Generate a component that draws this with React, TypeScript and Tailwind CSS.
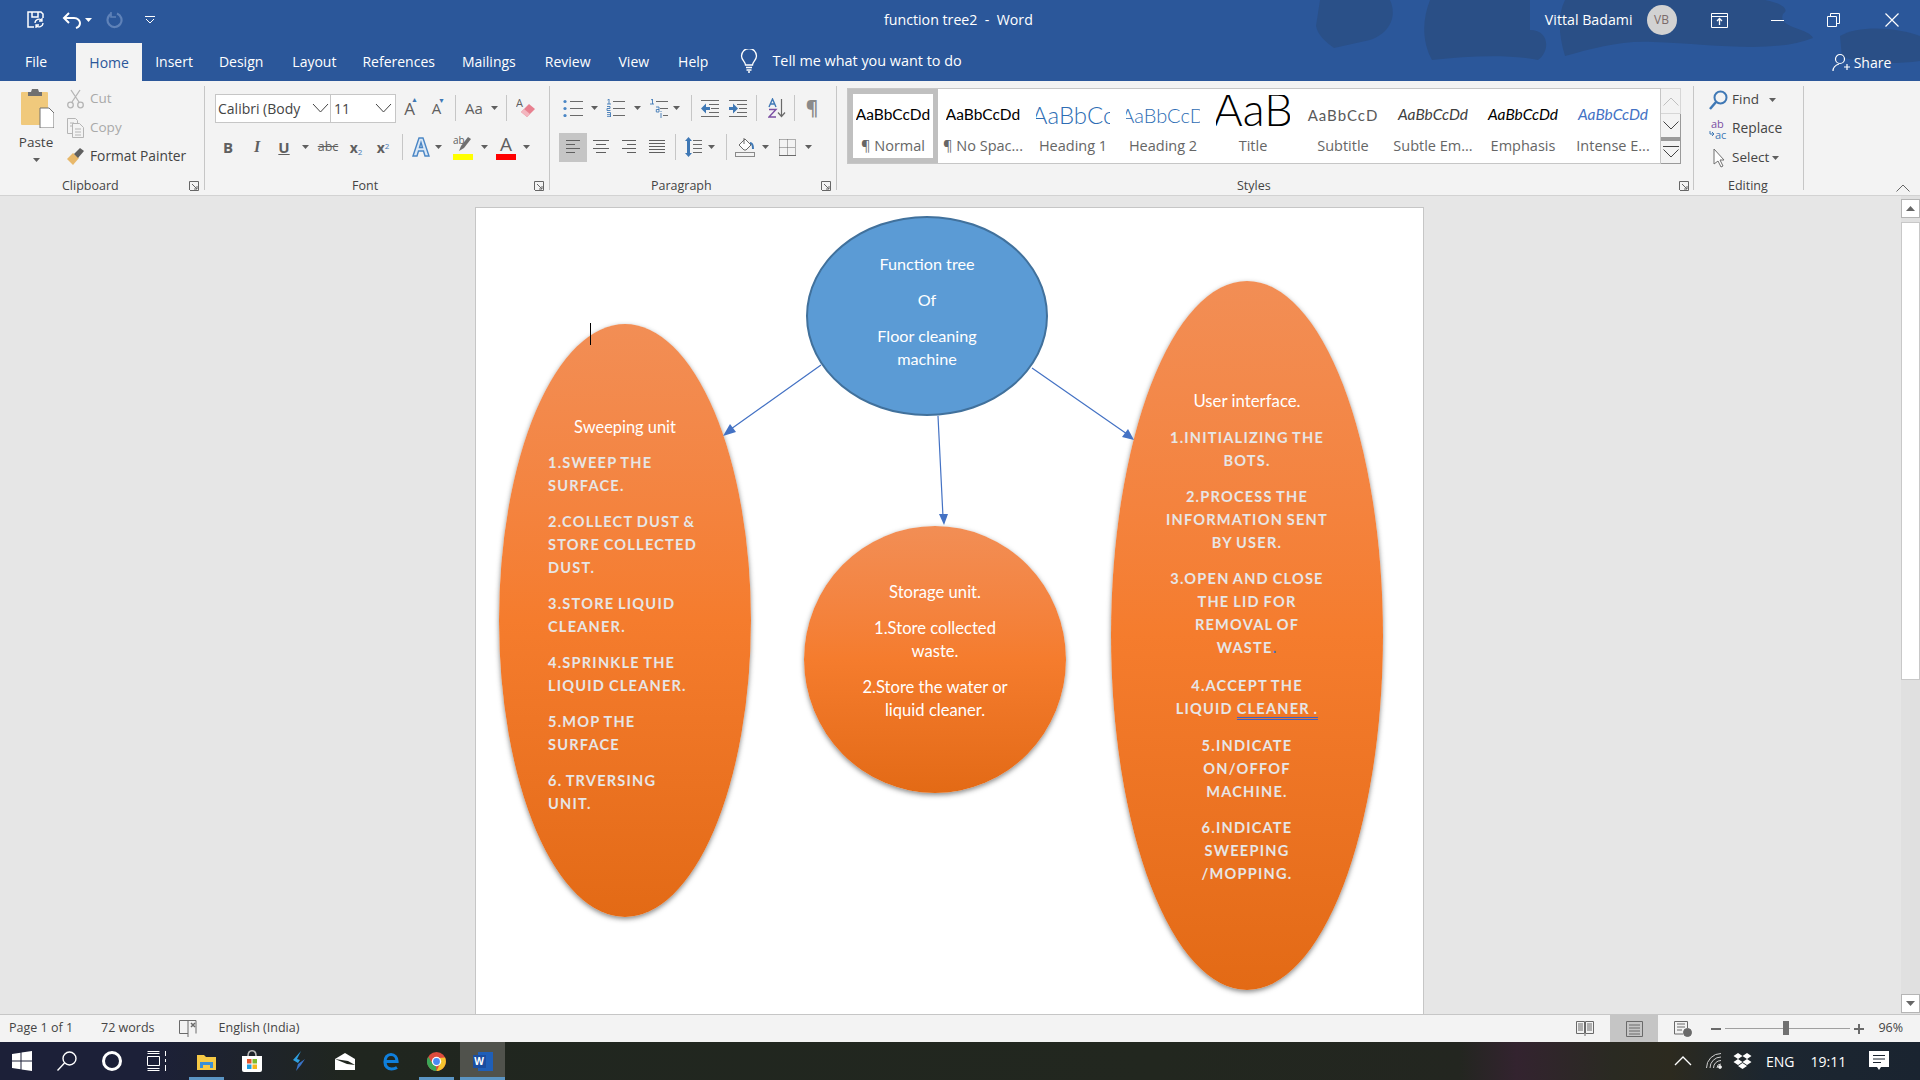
import React from 'react';

const Caret = ({ className = '' }: { className?: string }) => (
  <svg width="7" height="4" viewBox="0 0 7 4" className={`shrink-0 ${className}`}>
    <path d="M0 0h7L3.5 4z" fill="#5f5f5f" />
  </svg>
);

const Sep = ({ className = '' }: { className?: string }) => (
  <div className={`w-px h-[26px] bg-[#c6c6c6] shrink-0 ${className}`} />
);

const Launcher = ({ className = '' }: { className?: string }) => (
  <svg width="10" height="10" viewBox="0 0 10 10" className={`shrink-0 ${className}`} fill="none" stroke="#666">
    <path d="M.5 9V.5H9.5V9.5H1" />
    <path d="M3 3l5 5M8 5v3H5" />
  </svg>
);

const GroupSep = () => <div className="w-px bg-[#c6c6c6] my-[5px] shrink-0" />;

const AlignIcon = ({ mode, className = '' }: { mode: 'l' | 'c' | 'r' | 'j'; className?: string }) => {
  const rows = mode === 'l'
    ? [[2, 16], [2, 11], [2, 16], [2, 11]]
    : mode === 'c'
      ? [[1, 17], [4, 14], [1, 17], [4, 14]]
      : mode === 'r'
        ? [[2, 16], [7, 16], [2, 16], [7, 16]]
        : [[1, 17], [1, 17], [1, 17], [1, 17], [1, 17]];
  const step = mode === 'j' ? 3 : 4;
  return (
    <svg width="18" height="16" viewBox="0 0 18 16" className={`shrink-0 ${className}`} stroke="#5f5f5f">
      {rows.map((r, i) => <path key={i} d={`M${r[0]} ${1.5 + i * step}H${r[1]}`} />)}
    </svg>
  );
};

const Bullets = ({ className = '' }: { className?: string }) => (
  <svg width="20" height="18" viewBox="0 0 20 18" className={`shrink-0 ${className}`}>
    <path d="M7 2.5h13M7 9.5h13M7 16.5h13" stroke="#6a6a6a" />
    <circle cx="2" cy="2.5" r="1.6" fill="#4a86c5" /><circle cx="2" cy="9.5" r="1.6" fill="#4a86c5" /><circle cx="2" cy="16.5" r="1.6" fill="#4a86c5" />
  </svg>
);

const Numbering = ({ className = '' }: { className?: string }) => (
  <svg width="19" height="18" viewBox="0 0 19 18" className={`shrink-0 ${className}`}>
    <path d="M7 2.5h12M7 9.5h12M7 16.5h12" stroke="#6a6a6a" />
    <path d="M1.5 1L3 0v5M1 5h4M1 7.5h3v2H1v2h3.5M1 13.5h3.5V18M1 15.7h3M1 17.7h3.5" stroke="#3f78b5" fill="none" strokeWidth="0.9" />
  </svg>
);

const Multilevel = ({ className = '' }: { className?: string }) => (
  <svg width="18" height="19" viewBox="0 0 18 19" className={`shrink-0 ${className}`}>
    <path d="M6 2.5h12M10 9.5h8M13 16.5h5" stroke="#6a6a6a" />
    <path d="M1 1l1.5-1v5M0 5h4" stroke="#3f78b5" fill="none" strokeWidth="0.9" />
    <path d="M6 8h3v5H6.3V10.5H9" stroke="#3f78b5" fill="none" strokeWidth="0.9" />
    <path d="M11 14v5M11 12v1" stroke="#3f78b5" strokeWidth="0.9" />
  </svg>
);

const Indent = ({ flip, className = '' }: { flip?: boolean; className?: string }) => (
  <svg width="18" height="17" viewBox="0 0 18 17" className={`shrink-0 ${className}`}>
    <path d="M0 .5h18M8 4.5h10M10 8.5h8M8 12.5h10M0 16.5h18" stroke="#6a6a6a" />
    {flip
      ? <path d="M0 7h4V3.5L9 8.5l-5 5V10H0z" fill="#3f78b5" />
      : <path d="M9 7H5V3.5L0 8.5l5 5V10h4z" fill="#3f78b5" />}
  </svg>
);

const Sort = ({ className = '' }: { className?: string }) => (
  <svg width="18" height="20" viewBox="0 0 18 20" className={`shrink-0 ${className}`} fill="none">
    <path d="M1 9L4.5 1 8 9M2.5 6h4" stroke="#3f78b5" strokeWidth="1.4" />
    <path d="M1 11.5h7L1 19h7" stroke="#7b4fa3" strokeWidth="1.4" />
    <path d="M13.5 1v17M10 14.5l3.5 4 3.5-4" stroke="#6a6a6a" strokeWidth="1.2" />
  </svg>
);

const LineSpacing = ({ className = '' }: { className?: string }) => (
  <svg width="17" height="20" viewBox="0 0 17 20" className={`shrink-0 ${className}`}>
    <path d="M8 3.5h9M8 7.5h9M8 11.5h9M8 15.5h9" stroke="#6a6a6a" />
    <path d="M3.5 0L7 4H5v12h2l-3.5 4L0 16h2V4H0z" fill="#3f78b5" />
  </svg>
);

const Shading = ({ className = '' }: { className?: string }) => (
  <svg width="20" height="20" viewBox="0 0 20 20" className={`shrink-0 ${className}`} fill="none">
    <path d="M4 8l6-6 6 6-5 5-2 0z" stroke="#6a6a6a" fill="#fff" />
    <path d="M9 1v6" stroke="#6a6a6a" />
    <path d="M15 6c3 0 3 3 3 6" stroke="#3f78b5" strokeWidth="2" />
    <rect x=".5" y="15.5" width="19" height="4" stroke="#8a8a8a" />
  </svg>
);

const Borders = ({ className = '' }: { className?: string }) => (
  <svg width="17" height="17" viewBox="0 0 17 17" className={`shrink-0 ${className}`} fill="none" stroke="#6a6a6a">
    <path d="M.5.5h16v16M.5.5v16M8.5.5v16M.5 8.5h16" strokeDasharray="1 1" />
    <path d="M0 16.5h17" />
  </svg>
);

const GALLERY = [
  { label: '¶ Normal', text: 'AaBbCcDd', cls: "font-['Lato'] text-[15.5px] text-black", selected: true },
  { label: '¶ No Spac...', text: 'AaBbCcDd', cls: "font-['Lato'] text-[15.5px] text-black" },
  { label: 'Heading 1', text: 'AaBbCc', cls: "font-['Lato'] font-light text-[24px] text-[#2e6db4]" },
  { label: 'Heading 2', text: 'AaBbCcD', cls: "font-['Lato'] font-light text-[20px] text-[#2e6db4]" },
  { label: 'Title', text: 'AaB', cls: "font-['Lato'] font-light text-[45px] leading-[46px] text-black -mt-[12px]" },
  { label: 'Subtitle', text: 'AaBbCcD', cls: "font-['Lato'] text-[15px] tracking-[1px] text-[#5a5a5a]" },
  { label: 'Subtle Em...', text: 'AaBbCcDd', cls: "font-['Lato'] italic text-[15.5px] text-[#404040]" },
  { label: 'Emphasis', text: 'AaBbCcDd', cls: "font-['Lato'] italic text-[15.5px] text-black" },
  { label: 'Intense E...', text: 'AaBbCcDd', cls: "font-['Lato'] italic text-[15.5px] text-[#4472c4]" },
];

const TABS = [
  { label: 'File', cls: 'ml-[25px]' },
  { label: 'Insert', cls: 'ml-[13px]' },
  { label: 'Design', cls: 'ml-[26px]' },
  { label: 'Layout', cls: 'ml-[29px]' },
  { label: 'References', cls: 'ml-[26px]' },
  { label: 'Mailings', cls: 'ml-[27px]' },
  { label: 'Review', cls: 'ml-[29px]' },
  { label: 'View', cls: 'ml-[28px]' },
  { label: 'Help', cls: 'ml-[29px]' },
];

const TitleBar = () => (
  <div className="relative bg-[#2b579a] text-white shrink-0 h-[81px] overflow-hidden">
    <svg width="640" height="81" viewBox="0 0 640 81" className="absolute right-0 top-0">
      <path d="M40 0h70c8 18-2 34-20 40l-36 8c-8-6-16-12-18-22z" fill="#2a5088" />
      <path d="M150 0h100v30c20 0 20 22 8 30-30-6-70-4-106 0-10-18-10-40-2-60z" fill="#2a4f86" />
      <path d="M285 0h200c20 4 24 10 18 14-6 14 26 14 30 24-40 16-100 6-160 4-30-2-60 6-88 14-6-20-8-40 0-56z" fill="#2a4f86" />
      <path d="M560 36c20-12 60-8 80 0v25c-30 4-60 2-78-4z" fill="#2a4f86" />
    </svg>
    <div className="relative flex items-center h-[40px]">
      <svg width="20" height="20" viewBox="0 0 20 20" className="ml-[26px] shrink-0" fill="none" stroke="#fff" strokeWidth="1.5">
        <path d="M8 17H2V2h13l2 2v4" />
        <path d="M6 2v5h6V2" />
        <path d="M9 13a4 4 0 0 1 7-2.5M17 13a4 4 0 0 1-7 2.5M16 8v3h-3M10 18v-3h3" strokeWidth="1.3" />
      </svg>
      <svg width="20" height="18" viewBox="0 0 20 18" className="ml-[16px] shrink-0" fill="none" stroke="#fff" strokeWidth="2">
        <path d="M7 2L2 7l5 5" />
        <path d="M2 7h10c4 0 6 3 6 5s-1 4-4 5" />
      </svg>
      <svg width="7" height="4" viewBox="0 0 7 4" className="ml-[3px] shrink-0"><path d="M0 0h7L3.500 4z" fill="#fff" /></svg>
      <svg width="18" height="18" viewBox="0 0 18 18" className="ml-[14px] shrink-0" fill="none" stroke="#5f82b8" strokeWidth="2.2">
        <path d="M11 2.500a7 7 0 1 1-6 .5" />
        <path d="M5 1v5h5" strokeWidth="1.6" />
      </svg>
      <svg width="10" height="8" viewBox="0 0 10 8" className="ml-[21px] shrink-0" fill="none" stroke="#fff">
        <path d="M0 .5h10M1 3l4 4 4-4" />
      </svg>
      <div className="ml-[729px] text-[14.200px] whitespace-pre">function tree2  -  Word</div>
      <div className="ml-[512px] text-[14.200px]">Vittal Badami</div>
      <div className="ml-[14px] w-[30px] h-[30px] rounded-full bg-[#d2d2d2] text-[#7a6a6a] text-[12px] flex items-center justify-center">VB</div>
      <svg width="17" height="15" viewBox="0 0 17 15" className="ml-[34px] shrink-0" fill="none" stroke="#fff">
        <path d="M.5.500h16v14H.5zM.5 3.500h16" />
        <path d="M8.500 12V6M6 8l2.500-2.500L11 8" strokeWidth="1.300" />
      </svg>
      <div className="ml-[43px] w-[13px] h-px bg-white" />
      <svg width="13" height="14" viewBox="0 0 13 14" className="ml-[43px] shrink-0" fill="none" stroke="#fff">
        <path d="M.5 3.500h9v10h-9zM3.500 3.500V.5h9v10h-3" />
      </svg>
      <svg width="14" height="14" viewBox="0 0 14 14" className="ml-[45px] shrink-0" stroke="#fff" strokeWidth="1.200">
        <path d="M.5.500l13 13M13.500.500l-13 13" />
      </svg>
    </div>
    <div className="relative flex items-center h-[41px] text-[14px] pt-px">
      <div className={TABS[0].cls}>{TABS[0].label}</div>
      <div className="ml-[29px] w-[66px] h-[38px] mt-auto bg-[#f3f3f3] text-[#2b579a] flex items-center justify-center">Home</div>
      {TABS.slice(1).map(t => <div key={t.label} className={t.cls}>{t.label}</div>)}
      <svg width="18" height="24" viewBox="0 0 18 24" className="ml-[32px] shrink-0" fill="none" stroke="#fff" strokeWidth="1.300">
        <path d="M5.500 16c0-3-4-5-4-9a7.500 7.500 0 0 1 15 0c0 4-4 6-4 9z" />
        <path d="M6 18.500h6M6.500 21h5M8 23h2" />
      </svg>
      <div className="ml-[14px] text-[14.400px]">Tell me what you want to do</div>
      <svg width="18" height="19" viewBox="0 0 18 19" className="ml-[870px] mt-[3px] shrink-0" fill="none" stroke="#fff" strokeWidth="1.200">
        <circle cx="8" cy="6" r="4.500" />
        <path d="M1 18c0-4 3-6 6-7M12 14h6M15 11v6" />
      </svg>
      <div className="ml-[4px] mt-[3px]">Share</div>
    </div>
  </div>
);

const Clipboard = () => (
  <div className="w-[204px] flex flex-col shrink-0">
    <div className="flex flex-1">
      <div className="w-[67px] flex flex-col items-center pt-[7px] pl-[5px] shrink-0">
        <svg width="36" height="40" viewBox="0 0 36 40" className="shrink-0">
          <rect x="3" y="4" width="27" height="33" rx="1" fill="#f0c97c" />
          <path d="M10 4h3l1-3h6l1 3h3v4H10z" fill="#707070" />
          <path d="M22 20h9l5 5v15H22z" fill="#fff" stroke="#707070" />
        </svg>
        <div className="text-[13.500px] leading-[18px] mt-[5px]">Paste</div>
        <Caret className="mt-[7px]" />
      </div>
      <div className="flex flex-col pt-[3px]">
        <div className="flex items-center h-[29px] text-[#a9a9a9]">
          <svg width="17" height="20" viewBox="0 0 17 20" className="shrink-0" fill="none" stroke="#b5b5b5" strokeWidth="1.300">
            <path d="M4 1l8 12M13 1L5 13" />
            <circle cx="3.500" cy="16" r="2.800" /><circle cx="13.500" cy="16" r="2.800" />
          </svg>
          <span className="ml-[6px]">Cut</span>
        </div>
        <div className="flex items-center h-[29px] text-[#a9a9a9]">
          <svg width="17" height="20" viewBox="0 0 17 20" className="shrink-0" fill="#f3f3f3" stroke="#b5b5b5">
            <path d="M.5.500h8l2 2v13H.5z" /><path d="M5.500 5.500h7l4 4v10h-11z" />
            <path d="M3 5h4M3 8h2M8 11h6M8 14h6M8 17h6" />
          </svg>
          <span className="ml-[6px]">Copy</span>
        </div>
        <div className="flex items-center h-[29px]">
          <svg width="17" height="17" viewBox="0 0 17 17" className="shrink-0">
            <path d="M0 11l6-6 6 5-6 7z" fill="#e8b86a" />
            <path d="M7 6l6-6 4 3-6 7z" fill="#5f5f5f" />
          </svg>
          <span className="ml-[6px] text-[13.800px]">Format Painter</span>
        </div>
      </div>
    </div>
    <div className="h-[20px] mb-[-1px] flex items-center pl-[62px] pr-[5px] text-[12.500px]">
      <span>Clipboard</span>
      <Launcher className="ml-auto" />
    </div>
  </div>
);

const Font = () => (
  <div className="w-[344px] flex flex-col shrink-0 pl-[10px]">
    <div className="flex items-center h-[30px] mt-[12px]">
      <div className="w-[116px] h-[29px] bg-white border border-[#c6c6c6] flex items-center pl-[2px] text-[14px] overflow-hidden">
        <span className="whitespace-nowrap w-[92px]">Calibri (Body</span>
        <svg width="17" height="10" viewBox="0 0 17 10" fill="none" stroke="#444" className="ml-[2px] shrink-0"><path d="M1 1l7.500 8L16 1" /></svg>
      </div>
      <div className="w-[65px] h-[29px] bg-white border border-l-0 border-[#c6c6c6] flex items-center pl-[3px] text-[14px]">
        <span>11</span>
        <svg width="17" height="10" viewBox="0 0 17 10" fill="none" stroke="#444" className="ml-auto mr-[3px] shrink-0"><path d="M1 1l7.500 8L16 1" /></svg>
      </div>
      <div className="ml-[5px] w-[17px] text-[17px] leading-none text-[#5f5f5f] text-center relative">A<span className="absolute -top-[4px] right-0 text-[7px] text-[#3f78b5]">▲</span></div>
      <div className="ml-[10px] w-[17px] text-[15px] leading-none text-[#5f5f5f] text-center relative">A<span className="absolute -top-[4px] right-0 text-[7px] text-[#3f78b5]">▼</span></div>
      <Sep className="ml-[10px]" />
      <div className="ml-[8px] w-[20px] text-[15px] text-[#5f5f5f] text-center">Aa</div>
      <Caret className="ml-[7px]" />
      <Sep className="ml-[8px]" />
      <svg width="20" height="22" viewBox="0 0 20 22" className="ml-[9px] shrink-0">
        <text x="0" y="10" fontSize="11" fill="#5f5f5f" fontFamily="Open Sans">A</text>
        <path d="M5 15l8-8 6 5-8 8z" fill="#e8808f" />
        <path d="M5 15l3-3 6 5-3 3z" fill="#f3b6bf" />
      </svg>
    </div>
    <div className="flex items-center h-[30px] mt-[9px] text-[#5f5f5f]">
      <div className="ml-[3px] w-[20px] text-center font-bold text-[15px]">B</div>
      <div className="ml-[9px] w-[20px] text-center font-bold italic font-['Liberation_Serif'] text-[16px]">I</div>
      <div className="ml-[7px] w-[20px] text-center font-bold underline text-[15px]">U</div>
      <Caret className="ml-[8px]" />
      <div className="ml-[7px] w-[24px] text-center line-through text-[12.500px]">abc</div>
      <div className="ml-[6px] w-[20px] text-center font-bold text-[14px]">x<sub className="text-[8px] text-[#3f78b5] font-normal">2</sub></div>
      <div className="ml-[7px] w-[20px] text-center font-bold text-[14px]">x<sup className="text-[8px] text-[#3f78b5] font-normal">2</sup></div>
      <Sep className="ml-[9px]" />
      <svg width="18" height="20" viewBox="0 0 18 20" className="ml-[9px] shrink-0" fill="#dbe8f6" stroke="#4a86c5" strokeWidth="1.400">
        <path d="M1 19L7 1h4l6 18h-4l-1.500-5h-5L5 19zM7.500 10.500h3L9 5.500z" />
      </svg>
      <Caret className="ml-[5px]" />
      <div className="ml-[11px] w-[20px] h-[25px] flex flex-col">
        <svg width="20" height="18" viewBox="0 0 20 18" className="shrink-0">
          <text x="0" y="9" fontSize="10" fill="#5f5f5f" fontFamily="Open Sans">ab</text>
          <path d="M6 16l2-5 7-9 3 2-7 9z" fill="#707070" />
        </svg>
        <div className="h-[6px] bg-[#ffff00] mt-px" />
      </div>
      <Caret className="ml-[8px]" />
      <div className="ml-[8px] w-[20px] h-[25px] flex flex-col">
        <div className="h-[18px] text-[19px] leading-[18px] text-center">A</div>
        <div className="h-[6px] bg-[#ff0000] mt-px" />
      </div>
      <Caret className="ml-[7px]" />
    </div>
    <div className="h-[20px] mt-auto mb-[-1px] flex items-center pr-[5px] text-[12.500px]">
      <span className="ml-[137px]">Font</span>
      <Launcher className="ml-auto" />
    </div>
  </div>
);

const Paragraph = () => (
  <div className="w-[286px] flex flex-col shrink-0 pl-[9px]">
    <div className="flex items-center h-[30px] mt-[12px]">
      <Bullets className="ml-[4px]" />
      <Caret className="ml-[8px]" />
      <Numbering className="ml-[8px]" />
      <Caret className="ml-[9px]" />
      <Multilevel className="ml-[9px]" />
      <Caret className="ml-[5px]" />
      <Sep className="ml-[11px]" />
      <Indent className="ml-[9px]" />
      <Indent flip className="ml-[10px]" />
      <Sep className="ml-[9px]" />
      <Sort className="ml-[11px]" />
      <Sep className="ml-[8px]" />
      <div className="ml-[9px] w-[16px] text-[19px] leading-none text-center font-bold text-[#8a8a8a]">¶</div>
    </div>
    <div className="flex items-center h-[30px] mt-[9px]">
      <div className="w-[28px] h-[29px] bg-[#c5c5c5] flex items-center justify-center"><AlignIcon mode="l" /></div>
      <AlignIcon mode="c" className="ml-[5px]" />
      <AlignIcon mode="r" className="ml-[10px]" />
      <AlignIcon mode="j" className="ml-[10px]" />
      <Sep className="ml-[9px]" />
      <LineSpacing className="ml-[9px]" />
      <Caret className="ml-[6px]" />
      <Sep className="ml-[11px]" />
      <Shading className="ml-[8px]" />
      <Caret className="ml-[7px]" />
      <Borders className="ml-[10px]" />
      <Caret className="ml-[9px]" />
    </div>
    <div className="h-[20px] mt-auto mb-[-1px] flex items-center pr-[5px] text-[12.500px]">
      <span className="ml-[92px]">Paragraph</span>
      <Launcher className="ml-auto" />
    </div>
  </div>
);

const Styles = () => (
  <div className="w-[856px] flex flex-col shrink-0 pl-[10px]">
    <div className="flex mt-[7px] h-[76px]">
      <div className="w-[814px] h-[76px] bg-white border border-[#c6c6c6] flex shrink-0">
        {GALLERY.map(g => (
          <div
            key={g.label}
            className={g.selected
              ? 'w-[90px] shrink-0 border-[5px] border-[#c0c0c0] flex flex-col items-center'
              : 'w-[90px] shrink-0 border-[5px] border-transparent flex flex-col items-center'}
          >
            <div className="h-[40px] mt-px w-[74px] flex items-center justify-center overflow-hidden whitespace-nowrap">
              <span className={g.cls}>{g.text}</span>
            </div>
            <div className="text-[14.500px] leading-[18px] mt-[2px] text-[#666] whitespace-nowrap">{g.label}</div>
          </div>
        ))}
      </div>
      <div className="w-[20px] flex flex-col shrink-0">
        <div className="h-[26px] border border-l-0 border-[#d6d6d6] flex items-center justify-center">
          <svg width="16" height="9" viewBox="0 0 16 9" fill="none" stroke="#c0c0c0"><path d="M.5 8.500L8 1l7.500 7.500" /></svg>
        </div>
        <div className="h-[24px] border border-l-0 border-t-0 border-[#9a9a9a] flex items-center justify-center">
          <svg width="16" height="9" viewBox="0 0 16 9" fill="none" stroke="#444"><path d="M.5.500L8 8l7.500-7.500" /></svg>
        </div>
        <div className="h-[26px] border border-l-0 border-t-[3px] border-[#9a9a9a] flex flex-col items-center justify-center">
          <div className="w-[16px] h-px bg-[#444] mb-[2px]" />
          <svg width="16" height="9" viewBox="0 0 16 9" fill="none" stroke="#444"><path d="M.5.500L8 8l7.500-7.500" /></svg>
        </div>
      </div>
    </div>
    <div className="h-[20px] mt-auto mb-[-1px] flex items-center pr-[4px] text-[12.500px]">
      <span className="ml-[390px]">Styles</span>
      <Launcher className="ml-auto" />
    </div>
  </div>
);

const Editing = () => (
  <div className="w-[109px] flex flex-col shrink-0">
    <div className="flex flex-col pt-[2px] pl-[15px] mt-[1px]">
      <div className="flex items-center h-[29px] mt-[1px]">
        <svg width="19" height="20" viewBox="0 0 19 20" className="shrink-0" fill="none">
          <circle cx="11.500" cy="7.500" r="6" stroke="#3f78b5" strokeWidth="2" />
          <path d="M7 12l-6 7" stroke="#3f78b5" strokeWidth="2.500" />
        </svg>
        <span className="ml-[4px]">Find</span>
        <Caret className="ml-[10px]" />
      </div>
      <div className="flex items-center h-[29px]">
        <div className="w-[19px] text-[11px] leading-[11px] shrink-0">
          <div className="text-[#7b4fa3] pl-[2px]">ab</div>
          <div className="text-[#3f78b5] whitespace-nowrap flex items-center">
            <svg width="6" height="7" viewBox="0 0 6 7" fill="none" stroke="#3f78b5" className="shrink-0"><path d="M1 0v3h4M3 1l2 2-2 2" /></svg>
            ac
          </div>
        </div>
        <span className="ml-[4px] text-[13.800px]">Replace</span>
      </div>
      <div className="flex items-center h-[29px]">
        <svg width="12" height="20" viewBox="0 0 12 20" className="ml-[4px] shrink-0" fill="#fff" stroke="#707070">
          <path d="M1 1v15l4-3 3 6 2-1-3-6h4z" />
        </svg>
        <span className="ml-[7px]">Select</span>
        <Caret className="ml-[3px]" />
      </div>
    </div>
    <div className="h-[20px] mt-auto mb-[-1px] flex items-center pl-[34px] text-[12.500px]">Editing</div>
  </div>
);

const Ribbon = () => (
  <div className="relative h-[115px] bg-[#f3f3f3] border-b border-[#d2d2d2] flex text-[13.500px] text-[#444] shrink-0">
    <Clipboard />
    <GroupSep />
    <Font />
    <GroupSep />
    <Paragraph />
    <GroupSep />
    <Styles />
    <GroupSep />
    <Editing />
    <GroupSep />
    <svg width="14" height="8" viewBox="0 0 14 8" fill="none" stroke="#666" className="ml-[92px] mt-[103px] shrink-0"><path d="M.5 7.500L7 1l6.500 6.500" /></svg>
  </div>
);

const para = "mt-[13px] font-bold text-[#e7e6e6] text-[14.600px] tracking-[1.200px] [word-spacing:-1px]";
const orange = "absolute rounded-[50%] bg-gradient-to-b from-[#f28e55] via-[#f57c2d] via-50% to-[#e36a15] shadow-[0_2px_5px_rgba(40,40,40,0.55)] font-['Lato'] leading-[23px] flex flex-col";

const Diagram = () => (
  <>
    <div className="absolute left-[330px] top-[8px] w-[242px] h-[200px] rounded-[50%] bg-[#5b9bd5] border-2 border-[#41719c] font-['Lato'] leading-[23px] text-white text-[16.200px] text-center pt-[34px]">
      <div>Function tree</div>
      <div className="mt-[13px]">Of</div>
      <div className="mt-[13px]">Floor cleaning<br />machine</div>
    </div>

    <div className={`${orange} left-[23px] top-[116px] w-[252px] h-[593px] pt-[91px]`}>
      <div className="text-white text-[16.400px] text-center">Sweeping unit</div>
      <div className="pl-[49px]">
        <div className={para}>1.SWEEP THE<br />SURFACE.</div>
        <div className={para}>2.COLLECT DUST &amp;<br />STORE COLLECTED<br />DUST.</div>
        <div className={para}>3.STORE LIQUID<br />CLEANER.</div>
        <div className={para}>4.SPRINKLE THE<br />LIQUID CLEANER.</div>
        <div className={para}>5.MOP THE<br />SURFACE</div>
        <div className={para}>6. TRVERSING<br />UNIT.</div>
      </div>
    </div>

    <div className={`${orange} left-[328px] top-[318px] w-[262px] h-[267px] pt-[55px] items-center text-center text-white text-[16.600px]`}>
      <div>Storage unit.</div>
      <div className="mt-[13px]">1.Store collected<br />waste.</div>
      <div className="mt-[13px]">2.Store the water or<br />liquid cleaner.</div>
    </div>

    <div className={`${orange} left-[635px] top-[73px] w-[272px] h-[709px] pt-[108px] text-center`}>
      <div className="text-white text-[16.800px] mb-px">User interface.</div>
      <div className={para}>1.INITIALIZING THE<br />BOTS.</div>
      <div className={para}>2.PROCESS THE<br />INFORMATION SENT<br />BY USER.</div>
      <div className={para}>3.OPEN AND CLOSE<br />THE LID FOR<br />REMOVAL OF<br />WASTE<span className="text-[#4472c4]">.</span></div>
      <div className={`${para} mt-[15px]`}>4.ACCEPT THE<br />LIQUID <span className="border-b-[3px] border-double border-[#3f62c4]">CLEANER .</span></div>
      <div className={`${para} mt-[14px]`}>5.INDICATE<br />ON/OFFOF<br />MACHINE.</div>
      <div className={para}>6.INDICATE<br />SWEEPING<br />/MOPPING.</div>
    </div>

    <svg width="948" height="810" viewBox="0 0 948 810" className="absolute left-0 top-0 pointer-events-none" fill="#4472c4" stroke="none">
      <path d="M345 157L255 221M462 208L467 309M556 160L651 226" stroke="#4472c4" strokeWidth="1.200" />
      <path d="M247 228l7-12 6 8z" />
      <path d="M468 317l-5-11h9z" />
      <path d="M658 232l-12-3 6-8z" />
    </svg>

    <div className="absolute left-[114px] top-[115px] w-px h-[22px] bg-black" />
  </>
);

const Scrollbar = () => (
  <div className="w-[20px] h-full flex flex-col items-center bg-[#e0e0e0] border-l border-[#e6e6e6] pt-[3px] shrink-0">
    <div className="w-[19px] h-[19px] bg-white border border-[#b5b5b5] flex items-center justify-center shrink-0">
      <svg width="9" height="5" viewBox="0 0 9 5"><path d="M0 5h9L4.500 0z" fill="#666" /></svg>
    </div>
    <div className="w-[19px] h-[458px] bg-white border border-[#c8c8c8] mt-[4px] shrink-0" />
    <div className="mt-auto mb-px w-[19px] h-[19px] bg-white border border-[#b5b5b5] flex items-center justify-center shrink-0">
      <svg width="9" height="5" viewBox="0 0 9 5"><path d="M0 0h9L4.500 5z" fill="#666" /></svg>
    </div>
  </div>
);

const StatusBar = () => (
  <div className="h-[28px] bg-[#f3f3f3] border-t border-[#c6c6c6] flex items-center text-[12.500px] text-[#444] shrink-0">
    <span className="ml-[9px]">Page 1 of 1</span>
    <span className="ml-[28px]">72 words</span>
    <svg width="18" height="17" viewBox="0 0 18 17" className="ml-[24px] shrink-0" fill="none" stroke="#6a6a6a">
      <path d="M9 .5H.5v13H9M9 0v17M9 .5h8v13" />
      <path d="M12 3l4 4M16 3l-4 4" strokeWidth="1.500" />
    </svg>
    <span className="ml-[22px]">English (India)</span>
    <svg width="18" height="15" viewBox="0 0 18 15" className="ml-[1277px] shrink-0" fill="none" stroke="#6a6a6a">
      <path d="M.5.500h8v12h-8zM9.500.500h8v12h-8zM9 13v2M2 3h5M2 5h5M2 7h5M2 9h5M11 3h5M11 5h5M11 7h5M11 9h5" />
    </svg>
    <div className="ml-[16px] w-[48px] h-full bg-[#c5c5c5] flex items-center justify-center shrink-0">
      <svg width="17" height="16" viewBox="0 0 17 16" fill="none" stroke="#6a6a6a">
        <path d="M.5.500h16v15H.5zM3 4h11M3 7h11M3 10h11M3 13h11" />
      </svg>
    </div>
    <svg width="18" height="16" viewBox="0 0 18 16" className="ml-[16px] shrink-0" fill="none" stroke="#6a6a6a">
      <path d="M9 13H.5V.5h13V7M3 3h8M3 6h8M3 9h5" />
      <circle cx="13.500" cy="11.500" r="4" fill="#6a6a6a" />
    </svg>
    <div className="ml-[19px] w-[10px] h-[2px] bg-[#6a6a6a] shrink-0" />
    <div className="ml-[4px] w-[125px] h-[1px] bg-[#a0a0a0] relative shrink-0">
      <div className="absolute left-[58px] -top-[7px] w-[6px] h-[14px] bg-[#707070]" />
    </div>
    <svg width="10" height="10" viewBox="0 0 10 10" className="ml-[4px] shrink-0" stroke="#6a6a6a" strokeWidth="2"><path d="M0 5h10M5 0v10" /></svg>
    <span className="ml-[14px]">96%</span>
  </div>
);

const Taskbar = () => (
  <div className="h-[38px] shrink-0 flex items-center text-white bg-[linear-gradient(90deg,#1c2038_0%,#1c2038_8%,#20261f_18%,#22271f_60%,#232620_76%,#33232f_79%,#2a2a22_84%,#2c2a1f_87%,#1c2630_92%,#1a2430_100%)]">
    <svg width="20" height="20" viewBox="0 0 20 20" className="ml-[12px] shrink-0" fill="#fff">
      <path d="M0 3l8.500-1.200V9.500H0zM9.500 1.600L20 0v9.500H9.500zM0 10.500h8.500v7.700L0 17zM9.500 10.500H20V20L9.500 18.400z" />
    </svg>
    <svg width="20" height="20" viewBox="0 0 20 20" className="ml-[25px] shrink-0" fill="none" stroke="#fff" strokeWidth="1.400">
      <circle cx="12.500" cy="7.500" r="6.500" /><path d="M7.500 12L.5 19.500" />
    </svg>
    <div className="ml-[25px] w-[20px] h-[20px] rounded-full border-[3px] border-white shrink-0" />
    <svg width="20" height="20" viewBox="0 0 20 20" className="ml-[25px] shrink-0" fill="none" stroke="#fff">
      <path d="M.5.500h12M.5 2.500h12M.5 5.500h12v9H.5zM.5 17.500h12M.5 19.500h12M18.500 0v5M18.500 8v3M18.500 14v6" />
    </svg>
    <div className="ml-[22px] w-[35px] h-full flex items-center justify-center border-b-[3px] border-[#5b95c4] pt-[3px] shrink-0">
      <svg width="19" height="17" viewBox="0 0 19 17">
        <path d="M0 2h7l2 2h10v13H0z" fill="#f6c945" />
        <path d="M3 15V9h13v6h-3v-3H6v3z" fill="#3a8fd8" />
      </svg>
    </div>
    <svg width="20" height="22" viewBox="0 0 20 22" className="ml-[18px] shrink-0">
      <path d="M0 6h20v14a2 2 0 0 1-2 2H2a2 2 0 0 1-2-2z" fill="#fff" />
      <path d="M6 6c0-7 8-7 8 0" fill="none" stroke="#bbb" strokeWidth="1.500" />
      <rect x="5" y="9" width="4.500" height="4.500" fill="#e4542c" /><rect x="10.500" y="9" width="4.500" height="4.500" fill="#7dbb2c" />
      <rect x="5" y="14.500" width="4.500" height="4.500" fill="#1f9de0" /><rect x="10.500" y="14.500" width="4.500" height="4.500" fill="#f6b71c" />
    </svg>
    <svg width="14" height="20" viewBox="0 0 14 20" className="ml-[30px] shrink-0">
      <path d="M9 0L1 9l5 3 2-3-3-1z" fill="#2f9fe0" />
      <path d="M13 8l-7 5-2 7 5-6z" fill="#3a74c9" />
    </svg>
    <svg width="20" height="17" viewBox="0 0 20 17" className="ml-[29px] shrink-0">
      <path d="M0 6l10-6 10 6v11H0z" fill="#fff" />
      <path d="M0 6l13 2 7 4-8-1z" fill="#20261f" />
    </svg>
    <svg width="16" height="19" viewBox="0 0 16 19" className="ml-[28px] shrink-0" fill="none" stroke="#0f7fdc" strokeWidth="3.200">
      <path d="M2 9.500h12c0-4-2.500-7-6-7s-6 3-6 7.500 3 7 6.500 7c2 0 4-.6 5.500-1.500" />
    </svg>
    <div className="ml-[20px] w-[35px] h-full flex items-center justify-center border-b-[3px] border-[#5b95c4] pt-[3px] shrink-0">
      <svg width="19" height="19" viewBox="0 0 19 19">
        <circle cx="9.500" cy="9.500" r="9.500" fill="#dd4b3e" />
        <path d="M9.500 19a9.500 9.500 0 0 1-8.200-14.300L6 12.500l3 2z" fill="#3ba757" />
        <path d="M18 5.500a9.500 9.500 0 0 1-8.500 13.500L13 12l-1-6z" fill="#f6c42e" />
        <circle cx="9.500" cy="9.500" r="4.700" fill="#fff" /><circle cx="9.500" cy="9.500" r="3.400" fill="#4a8af4" />
      </svg>
    </div>
    <div className="ml-[6px] w-[45px] h-full bg-[#50524c] flex items-center justify-center shrink-0 border-b-[3px] border-[#5b95c4] pt-[3px]">
      <div className="relative w-[20px] h-[19px]">
        <div className="absolute right-0 top-0 w-[15px] h-[19px] bg-[#1f5fb8]" />
        <div className="absolute left-0 top-[3px] w-[13px] h-[13px] bg-[#1b4ea0] text-white text-[10px] font-bold leading-[13px] text-center">W</div>
      </div>
    </div>
    <svg width="18" height="10" viewBox="0 0 18 10" className="ml-[1169px] shrink-0" fill="none" stroke="#fff" strokeWidth="1.300"><path d="M1 9l8-8 8 8" /></svg>
    <svg width="16" height="16" viewBox="0 0 16 16" className="ml-[14px] shrink-0" fill="none" stroke="#d0d0d0">
      <path d="M.5 15a14.500 14.500 0 0 1 14.500-14.500M4 15A11 11 0 0 1 15 4M7.500 15A7.500 7.500 0 0 1 15 7.500M11 15a4 4 0 0 1 4-4" />
      <circle cx="14" cy="14" r="1.500" fill="#fff" />
    </svg>
    <svg width="19" height="17" viewBox="0 0 19 17" className="ml-[11px] shrink-0" fill="#fff">
      <path d="M5 0l4.500 3L5 6 .5 3zM14 0l4.500 3L14 6 9.500 3zM5 6l4.500 3L5 12 .5 9zM14 6l4.500 3L14 12 9.500 9zM5 13l4.500-3 4.500 3-4.500 3z" />
    </svg>
    <span className="ml-[14px] text-[14px]">ENG</span>
    <span className="ml-[16px] text-[14px]">19:11</span>
    <svg width="20" height="20" viewBox="0 0 20 20" className="ml-[23px] shrink-0">
      <path d="M0 0h20v16h-8l-2 3-2-3H0z" fill="#fff" />
      <path d="M4 4.500h12M4 8h12M4 11.500h8" stroke="#1a2430" />
    </svg>
  </div>
);

export default function App() {
  return (
    <div className="w-[1920px] h-[1080px] flex flex-col overflow-hidden font-['Open_Sans',sans-serif] bg-[#e6e6e6]">
      <TitleBar />
      <Ribbon />
      <div className="flex-1 min-h-0 flex">
        <div className="flex-1 pl-[475px] pt-[11px] overflow-hidden">
          <div className="relative w-[949px] h-[900px] bg-white border border-[#c6c6c6]">
            <Diagram />
          </div>
        </div>
        <Scrollbar />
      </div>
      <StatusBar />
      <Taskbar />
    </div>
  );
}
